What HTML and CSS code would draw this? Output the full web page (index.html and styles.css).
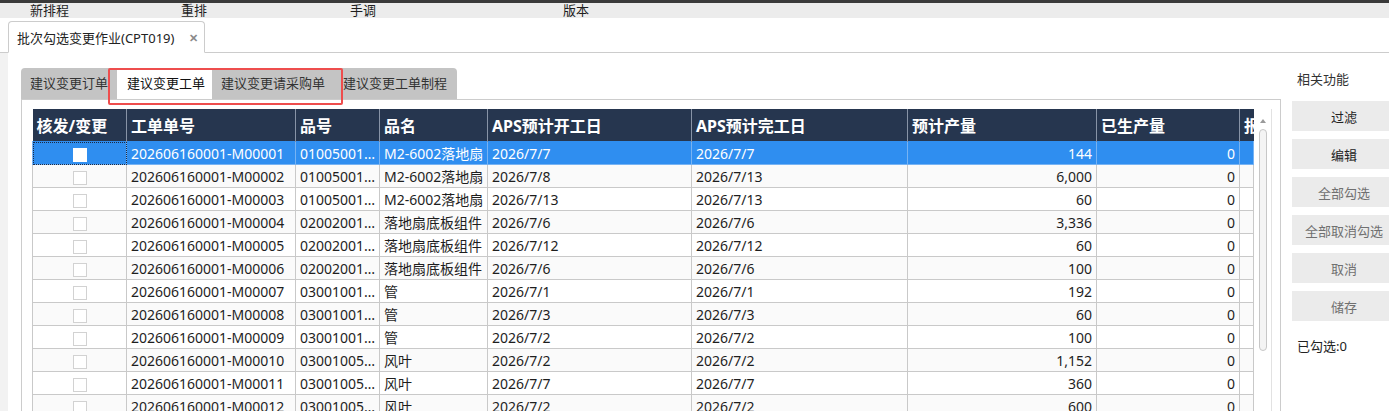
FILE: index.html
```html
<!DOCTYPE html>
<html lang="zh-CN">
<head>
    <meta charset="UTF-8">
    <meta name="viewport" content="width=device-width, initial-scale=1.0">
    <title>批次勾选变更作业</title>
    <link rel="stylesheet" href="styles.css">
</head>
<body>
    <div class="top-strip"></div>

    <div class="menu-bar">
        <span class="menu-item menu-new">新排程</span>
        <span class="menu-item menu-redo">重排</span>
        <span class="menu-item menu-manual">手调</span>
        <span class="menu-item menu-version">版本</span>
    </div>

    <div class="doc-tabs">
        <div class="doc-tab">
            <span>批次勾选变更作业(CPT019)</span>
            <span class="doc-close">✕</span>
        </div>
    </div>

    <div class="workspace">
        <div class="gutter"></div>

        <div class="main-area">
            <div class="sheet">
                <div class="sheet-tabs">
                    <div class="sheet-tab">建议变更订单</div>
                    <div class="sheet-tab active">建议变更工单</div>
                    <div class="sheet-tab">建议变更请采购单</div>
                    <div class="sheet-tab">建议变更工单制程</div>
                    <!-- annotation box drawn over the two tabs -->
                    <div class="mark-box"></div>
                </div>

                <div class="grid-panel">
                    <table class="grid">
                        <colgroup>
                            <col style="width:94px">
                            <col style="width:169px">
                            <col style="width:84px">
                            <col style="width:108px">
                            <col style="width:204px">
                            <col style="width:216px">
                            <col style="width:189px">
                            <col style="width:143px">
                            <col style="width:14px">
                        </colgroup>
                        <thead>
                            <tr>
                                <th>核发/变更</th>
                                <th>工单单号</th>
                                <th>品号</th>
                                <th>品名</th>
                                <th>APS预计开工日</th>
                                <th>APS预计完工日</th>
                                <th>预计产量</th>
                                <th>已生产量</th>
                                <th>报工数量</th>
                            </tr>
                        </thead>
                        <tbody>
                            <tr class="selected">
                                <td class="chk focus"><span class="check"></span></td>
                                <td>202606160001-M00001</td>
                                <td>0100500100012</td>
                                <td>M2-6002落地扇</td>
                                <td>2026/7/7</td>
                                <td>2026/7/7</td>
                                <td class="num">144</td>
                                <td class="num">0</td>
                                <td></td>
                            </tr>
                            <tr>
                                <td class="chk"><span class="check"></span></td>
                                <td>202606160001-M00002</td>
                                <td>0100500100012</td>
                                <td>M2-6002落地扇</td>
                                <td>2026/7/8</td>
                                <td>2026/7/13</td>
                                <td class="num">6,000</td>
                                <td class="num">0</td>
                                <td></td>
                            </tr>
                            <tr>
                                <td class="chk"><span class="check"></span></td>
                                <td>202606160001-M00003</td>
                                <td>0100500100012</td>
                                <td>M2-6002落地扇</td>
                                <td>2026/7/13</td>
                                <td>2026/7/13</td>
                                <td class="num">60</td>
                                <td class="num">0</td>
                                <td></td>
                            </tr>
                            <tr>
                                <td class="chk"><span class="check"></span></td>
                                <td>202606160001-M00004</td>
                                <td>0200200100003</td>
                                <td>落地扇底板组件</td>
                                <td>2026/7/6</td>
                                <td>2026/7/6</td>
                                <td class="num">3,336</td>
                                <td class="num">0</td>
                                <td></td>
                            </tr>
                            <tr>
                                <td class="chk"><span class="check"></span></td>
                                <td>202606160001-M00005</td>
                                <td>0200200100003</td>
                                <td>落地扇底板组件</td>
                                <td>2026/7/12</td>
                                <td>2026/7/12</td>
                                <td class="num">60</td>
                                <td class="num">0</td>
                                <td></td>
                            </tr>
                            <tr>
                                <td class="chk"><span class="check"></span></td>
                                <td>202606160001-M00006</td>
                                <td>0200200100003</td>
                                <td>落地扇底板组件</td>
                                <td>2026/7/6</td>
                                <td>2026/7/6</td>
                                <td class="num">100</td>
                                <td class="num">0</td>
                                <td></td>
                            </tr>
                            <tr>
                                <td class="chk"><span class="check"></span></td>
                                <td>202606160001-M00007</td>
                                <td>0300100100021</td>
                                <td>管</td>
                                <td>2026/7/1</td>
                                <td>2026/7/1</td>
                                <td class="num">192</td>
                                <td class="num">0</td>
                                <td></td>
                            </tr>
                            <tr>
                                <td class="chk"><span class="check"></span></td>
                                <td>202606160001-M00008</td>
                                <td>0300100100021</td>
                                <td>管</td>
                                <td>2026/7/3</td>
                                <td>2026/7/3</td>
                                <td class="num">60</td>
                                <td class="num">0</td>
                                <td></td>
                            </tr>
                            <tr>
                                <td class="chk"><span class="check"></span></td>
                                <td>202606160001-M00009</td>
                                <td>0300100100021</td>
                                <td>管</td>
                                <td>2026/7/2</td>
                                <td>2026/7/2</td>
                                <td class="num">100</td>
                                <td class="num">0</td>
                                <td></td>
                            </tr>
                            <tr>
                                <td class="chk"><span class="check"></span></td>
                                <td>202606160001-M00010</td>
                                <td>0300100500008</td>
                                <td>风叶</td>
                                <td>2026/7/2</td>
                                <td>2026/7/2</td>
                                <td class="num">1,152</td>
                                <td class="num">0</td>
                                <td></td>
                            </tr>
                            <tr>
                                <td class="chk"><span class="check"></span></td>
                                <td>202606160001-M00011</td>
                                <td>0300100500008</td>
                                <td>风叶</td>
                                <td>2026/7/7</td>
                                <td>2026/7/7</td>
                                <td class="num">360</td>
                                <td class="num">0</td>
                                <td></td>
                            </tr>
                            <tr>
                                <td class="chk"><span class="check"></span></td>
                                <td>202606160001-M00012</td>
                                <td>0300100500008</td>
                                <td>风叶</td>
                                <td>2026/7/2</td>
                                <td>2026/7/2</td>
                                <td class="num">600</td>
                                <td class="num">0</td>
                                <td></td>
                            </tr>
                        </tbody>
                    </table>

                    <div class="scroll-track">
                        <div class="scroll-arrow"></div>
                        <div class="scroll-thumb"></div>
                    </div>
                </div>
            </div>

            <div class="side-panel">
                <div class="side-title">相关功能</div>
                <button type="button" class="side-button strong">过滤</button>
                <button type="button" class="side-button strong">编辑</button>
                <button type="button" class="side-button">全部勾选</button>
                <button type="button" class="side-button">全部取消勾选</button>
                <button type="button" class="side-button">取消</button>
                <button type="button" class="side-button">储存</button>
                <div class="side-count">已勾选:0</div>
            </div>
        </div>
    </div>
</body>
</html>
```

FILE: styles.css
```css
html, body {
    margin: 0;
    padding: 0;
    height: 100%;
    overflow: hidden;
}

body {
    background-color: #fff;
    color: #222;
    font-family: "Noto Sans", "Noto Sans CJK SC", sans-serif;
    font-size: 13px;
}

.top-strip {
    height: 3px;
    background-color: #3a3a3a;
}

/* top menu */
.menu-bar {
    height: 15px;
    background-color: #ececec;
    display: flex;
    align-items: center;
    font-size: 13px;
    line-height: 15px;
    color: #1e1e1e;
}

.menu-item {
    display: block;
    flex-shrink: 0;
}

.menu-new { margin-left: 30px; width: 151px; }
.menu-redo { width: 169px; }
.menu-manual { width: 213px; }

/* document tab */
.doc-tabs {
    height: 35px;
    padding-top: 3px;
    padding-left: 8px;
    box-sizing: border-box;
    display: flex;
    border-bottom: 1px solid #cccccc;
}

.doc-tab {
    width: 197px;
    box-sizing: border-box;
    height: 32px;
    margin-bottom: -1px;
    border: 1px solid #cccccc;
    border-bottom: 1px solid #fff;
    border-radius: 4px 4px 0 0;
    background-color: #fff;
    display: flex;
    align-items: center;
    padding-left: 8px;
    font-size: 13px;
    color: #222;
}

.doc-close {
    margin-left: 15px;
    color: #8a8a8a;
    font-size: 11px;
    font-weight: bold;
}

/* workspace */
.workspace {
    display: flex;
    height: calc(100% - 53px);
}

.gutter {
    width: 8px;
    flex-shrink: 0;
    background-color: #f2f2f2;
}

.main-area {
    flex: 1;
    display: flex;
    padding: 15px 0 0 13px;
}

.sheet {
    width: 1260px;
    flex-shrink: 0;
    display: flex;
    flex-direction: column;
}

.sheet-tabs {
    position: relative;
    width: 436px;
    height: 33px;
    background-color: #c4c4c4;
    border-radius: 4px 4px 0 0;
    display: flex;
    align-items: flex-end;
}

.sheet-tab {
    height: 31px;
    line-height: 31px;
    padding: 0 9px;
    color: #333;
    font-size: 13px;
}

.sheet-tab.active {
    background-color: #fff;
    color: #111;
    padding: 0 7px 0 10px;
}

.mark-box {
    position: absolute;
    left: 87px;
    top: 0;
    width: 231px;
    height: 33px;
    border: 2px solid #ee4d4d;
    border-radius: 2px;
}

.grid-panel {
    flex: 1;
    display: flex;
    border: 1px solid #cccccc;
    padding: 9px 0 0 10px;
}

/* data grid */
.grid {
    width: 1221px;
    flex-shrink: 0;
    table-layout: fixed;
    border-collapse: collapse;
    align-self: flex-start;
    font-size: 14px;
}

.grid th {
    height: 32px;
    background-color: #26364f;
    color: #fff;
    font-size: 16px;
    font-weight: bold;
    text-align: left;
    padding: 0 0 0 4px;
    white-space: nowrap;
    overflow: hidden;
    border-left: 1px solid #8793a6;
}

.grid th:first-child {
    border-left: none;
}

.grid td {
    height: 22px;
    padding: 0 0 0 4px;
    white-space: nowrap;
    overflow: hidden;
    text-overflow: ellipsis;
    border: 1px solid #c9c9c9;
    color: #1e1e1e;
}

.grid tbody tr:nth-child(even) td {
    background-color: #fafafa;
}

.grid td.num {
    text-align: right;
    padding-right: 4px;
}

.grid td.chk {
    text-align: center;
    text-overflow: clip;
    padding: 0;
}

.check {
    display: inline-block;
    width: 12px;
    height: 12px;
    border: 1px solid #d2d2d2;
    background-color: #fff;
    vertical-align: middle;
}

.grid tr.selected td {
    background-color: #2f8ef0;
    color: #fff;
    border-color: #77b3f3;
    border-top-color: #2f8ef0;
}

.grid tr.selected .check {
    border-color: #fff;
}

.grid td.focus {
    outline: 1px dotted #1a2a45;
    outline-offset: -1px;
}

/* scrollbar */
.scroll-track {
    width: 17px;
    flex-shrink: 0;
    border-right: 1px solid #e2e2e2;
}

.scroll-arrow {
    margin: 10px auto 0;
    width: 0;
    height: 0;
    border-left: 3px solid transparent;
    border-right: 3px solid transparent;
    border-bottom: 4px solid #9a9a9a;
}

.scroll-thumb {
    margin: 6px auto 0;
    width: 6px;
    height: 220px;
    border: 1px solid #c7c7c7;
    border-radius: 4px;
    background-color: #f4f4f4;
}

/* side panel */
.side-panel {
    flex-shrink: 0;
    padding: 2px 0 0 11px;
    display: flex;
    flex-direction: column;
    align-items: flex-start;
}

.side-title {
    line-height: 18px;
    margin: 0 0 13px 5px;
    color: #333;
}

.side-button {
    width: 104px;
    height: 30px;
    margin-bottom: 8px;
    border: none;
    background-color: #ebebeb;
    color: #707070;
    font-family: "Noto Sans", "Noto Sans CJK SC", sans-serif;
    font-size: 13px;
    padding: 0;
}

.side-button.strong {
    color: #222;
}

.side-count {
    margin: 8px 0 0 5px;
    line-height: 18px;
    color: #222;
}
```
